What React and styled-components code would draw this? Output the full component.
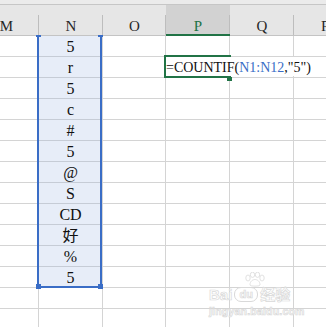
import React from 'react';
import styled, { createGlobalStyle } from 'styled-components';

const GlobalStyle = createGlobalStyle`
  html, body { margin: 0; padding: 0; background: #fff; }
  body {
    width: 326px; height: 327px; overflow: hidden;
    font-family: "Liberation Serif", "Noto Sans CJK TC", serif;
  }
`;

const COLS = [
  { key: 'M', width: 65 },
  { key: 'N', width: 64 },
  { key: 'O', width: 63 },
  { key: 'P', width: 64 },
  { key: 'Q', width: 64 },
  { key: 'R', width: 64 },
];
const template = COLS.map((c) => `${c.width}px`).join(' ');

const VALUES = ['5', 'r', '5', 'c', '#', '5', '@', 'S', 'CD', '好', '%', '5'];
const ROW_COUNT = 14;

const GREEN = '#217346';
const BLUE = '#3a6dc6';

const Sheet = styled.div`
  position: relative;
  width: 326px;
  height: 327px;
  overflow: hidden;
  background: #fff;
`;

const TopBand = styled.div`
  height: 4px;
  background: #ebebeb;
  border-bottom: 1px solid #c6c6c6;
`;

/* the sheet is scrolled so that column M is partly out of view */
const Viewport = styled.div`
  margin-left: -26px;
  width: 384px;
`;

const HeaderRow = styled.div`
  display: grid;
  grid-template-columns: ${template};
  background: #e6e6e6;
`;

const HeaderCell = styled.div`
  position: relative;
  box-sizing: border-box;
  height: 31px;
  display: flex;
  align-items: flex-end;
  justify-content: center;
  font-size: 15px;
  line-height: ${(p) => (p.$active ? '15px' : '17px')};
  color: ${(p) => (p.$active ? GREEN : '#262626')};
  background: ${(p) => (p.$active ? '#d2d2d2' : '#e6e6e6')};
  border-bottom: ${(p) => (p.$active ? `2px solid ${GREEN}` : '1px solid #c4c4c4')};
  &::after {
    content: '';
    position: absolute;
    right: 0;
    top: 10px;
    bottom: 0;
    width: 1px;
    background: #bdbdbd;
  }
`;

const Body = styled.div`
  position: relative;
`;

const Row = styled.div`
  display: grid;
  grid-template-columns: ${template};
`;

const Cell = styled.div`
  box-sizing: border-box;
  height: 21px;
  padding-top: 2px;
  border-right: 1px solid #d4d4d4;
  border-bottom: 1px solid ${(p) => (p.$selected ? '#c6ccd6' : '#d4d4d4')};
  background: ${(p) => (p.$selected ? '#e7edf8' : '#fff')};
  text-align: center;
  font-size: 16px;
  line-height: 18px;
  color: #111;
  white-space: nowrap;
  overflow: hidden;
`;

/* selection frame of N1:N12, drawn over the cells */
const Selection = styled.div`
  position: absolute;
  left: 63px;
  top: 0;
  width: 65px;
  height: 252px;
  box-sizing: border-box;
  border: 2px solid ${BLUE};
  border-top: none;
  display: flex;
  flex-direction: column;
  justify-content: space-between;
  pointer-events: none;
`;

const HandleBar = styled.div`
  display: flex;
  justify-content: space-between;
  margin: ${(p) => (p.$top ? '-1px -3px 0 -3px' : '0 -3px -3px -3px')};
`;

const Handle = styled.div`
  width: 5px;
  height: ${(p) => (p.$top ? 2 : 5)}px;
  background: ${BLUE};
`;

const Editor = styled.div`
  position: absolute;
  left: 190px;
  top: 19px;
  height: 23px;
`;

const EditorFrame = styled.div`
  box-sizing: border-box;
  width: 67px;
  height: 23px;
  border: 2px solid ${GREEN};
`;

const EditorText = styled.div`
  position: absolute;
  left: 2px;
  top: 2px;
  height: 19px;
  box-sizing: border-box;
  padding: 3px 6px 0 0;
  background: #fff;
  font-size: 14px;
  line-height: 16px;
  color: #111;
  white-space: nowrap;
`;

const Ref = styled.span`
  color: ${BLUE};
`;

const FillHandle = styled.div`
  position: absolute;
  left: 63px;
  top: 22px;
  width: 5px;
  height: 4px;
  background: ${GREEN};
`;

const Watermark = styled.div`
  position: absolute;
  left: 209px;
  top: 272px;
  display: flex;
  flex-direction: column;
  align-items: flex-start;
  pointer-events: none;
  font-family: "Liberation Sans", "Noto Sans CJK SC", sans-serif;
  font-weight: 700;
  color: rgba(255, 255, 255, 0.85);
  -webkit-text-stroke: 0.7px #d9d9d9;
`;

const PawTop = styled.svg`
  margin-left: 34px;
  display: block;
`;

const MarkLine = styled.div`
  display: flex;
  align-items: center;
  gap: 2px;
  font-size: 15px;
  line-height: 14px;
`;

const DuBadge = styled.span`
  display: inline-flex;
  align-items: center;
  justify-content: center;
  width: 22px;
  height: 13px;
  border-radius: 7px;
  border: 1px solid #d9d9d9;
  font-size: 11px;
  line-height: 11px;
`;

const Domain = styled.div`
  margin-top: 4px;
  font-size: 10.5px;
  line-height: 11px;
  letter-spacing: 0.2px;
`;

export default function App() {
  const rows = Array.from({ length: ROW_COUNT }, (_, i) => i);
  return (
    <>
      <GlobalStyle />
      <Sheet>
        <TopBand />
        <Viewport>
          <HeaderRow>
            {COLS.map((c) => (
              <HeaderCell key={c.key} $active={c.key === 'P'}>
                {c.key}
              </HeaderCell>
            ))}
          </HeaderRow>
          <Body>
            {rows.map((r) => (
              <Row key={r}>
                {COLS.map((c) => {
                  const selected = c.key === 'N' && r < VALUES.length;
                  return (
                    <Cell key={c.key} $selected={selected}>
                      {selected ? VALUES[r] : ''}
                    </Cell>
                  );
                })}
              </Row>
            ))}

            <Selection>
              <HandleBar $top>
                <Handle $top />
                <Handle $top />
              </HandleBar>
              <HandleBar>
                <Handle />
                <Handle />
              </HandleBar>
            </Selection>

            <Editor>
              <EditorFrame />
              <EditorText>
                =COUNTIF(<Ref>N1:N12</Ref>,"5")
              </EditorText>
              <FillHandle />
            </Editor>
          </Body>
        </Viewport>

        <Watermark>
          <PawTop width="24" height="15" viewBox="0 0 24 15">
            <g fill="#fff" stroke="#d9d9d9" strokeWidth="0.8">
              <ellipse cx="5" cy="6" rx="2.2" ry="3" />
              <ellipse cx="9.5" cy="2.8" rx="2.2" ry="2.6" />
              <ellipse cx="14.5" cy="2.8" rx="2.2" ry="2.6" />
              <ellipse cx="19" cy="6" rx="2.2" ry="3" />
              <path d="M7 13 C7 9 10 7.5 12 7.5 C14 7.5 17 9 17 13 C17 14.5 7 14.5 7 13 Z" />
            </g>
          </PawTop>
          <MarkLine>
            <span>Bai</span>
            <DuBadge>du</DuBadge>
            <span>经验</span>
          </MarkLine>
          <Domain>jingyan.baidu.com</Domain>
        </Watermark>
      </Sheet>
    </>
  );
}
